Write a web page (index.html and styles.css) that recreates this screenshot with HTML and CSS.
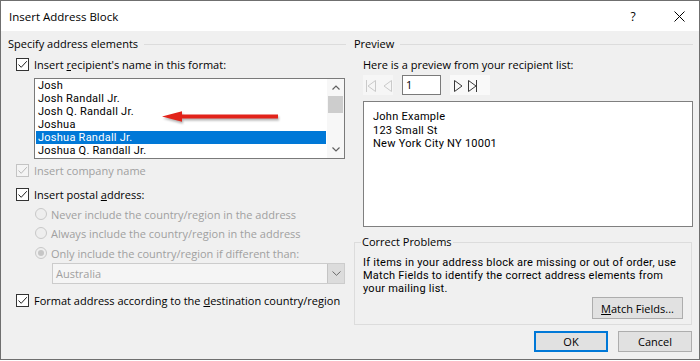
FILE: index.html
```html
<!DOCTYPE html>
<html lang="en">
<head>
  <meta charset="UTF-8">
  <meta name="viewport" content="width=device-width, initial-scale=1.0">
  <title>Insert Address Block</title>
  <link rel="stylesheet" href="styles.css">
</head>
<body>
  <div class="window">
    <div class="titlebar">
      <span class="title">Insert Address Block</span>
      <span class="help">?</span>
      <span class="close">
        <svg width="11" height="11" viewBox="0 0 11 11"><path d="M0.5 0.5L10.5 10.5M10.5 0.5L0.5 10.5" stroke="#000" stroke-width="1"/></svg>
      </span>
    </div>

    <div class="dialog-body">
      <div class="left">
        <div class="group-head"><span>Specify address elements</span><i class="rule"></i></div>

        <div class="check-row row-name">
          <span class="check"><svg width="11" height="11" viewBox="0 0 11 11"><path d="M1.5 5.5L4.2 8.3L9.8 2.2" fill="none" stroke="#222" stroke-width="1"/></svg></span>
          <span>Insert <u>r</u>ecipient's name in this format:</span>
        </div>

        <div class="listbox">
          <ul class="items">
            <li>Josh</li>
            <li>Josh Randall Jr.</li>
            <li>Josh Q. Randall Jr.</li>
            <li>Joshua</li>
            <li class="selected">Joshua Randall Jr.</li>
            <li>Joshua Q. Randall Jr.</li>
          </ul>
          <div class="scrollbar">
            <span class="arrow"><svg width="8" height="5" viewBox="0 0 8 5"><path d="M0.5 4.5L4 1L7.5 4.5" fill="none" stroke="#606060" stroke-width="1.2"/></svg></span>
            <span class="thumb"></span>
            <span class="track"></span>
            <span class="arrow"><svg width="8" height="5" viewBox="0 0 8 5"><path d="M0.5 0.5L4 4L7.5 0.5" fill="none" stroke="#606060" stroke-width="1.2"/></svg></span>
          </div>
        </div>

        <div class="check-row row-company disabled">
          <span class="check"><svg width="11" height="11" viewBox="0 0 11 11"><path d="M1.5 5.5L4.2 8.3L9.8 2.2" fill="none" stroke="#b8b8b8" stroke-width="1"/></svg></span>
          <span>Insert company name</span>
        </div>

        <div class="check-row row-postal">
          <span class="check"><svg width="11" height="11" viewBox="0 0 11 11"><path d="M1.5 5.5L4.2 8.3L9.8 2.2" fill="none" stroke="#222" stroke-width="1"/></svg></span>
          <span>Insert postal <u>a</u>ddress:</span>
        </div>

        <div class="radio-row first">
          <span class="radio"></span>
          <span>Never include the country/region in the address</span>
        </div>
        <div class="radio-row">
          <span class="radio"></span>
          <span>Always include the country/region in the address</span>
        </div>
        <div class="radio-row third">
          <span class="radio on"></span>
          <span>Only include the country/region if different than:</span>
        </div>

        <div class="combo">
          <span class="combo-text">Australia</span>
          <span class="combo-btn"><svg width="9" height="5" viewBox="0 0 9 5"><path d="M0.5 0.5L4.5 4.3L8.5 0.5" fill="none" stroke="#6a6a6a" stroke-width="1"/></svg></span>
        </div>

        <div class="check-row row-format">
          <span class="check"><svg width="11" height="11" viewBox="0 0 11 11"><path d="M1.5 5.5L4.2 8.3L9.8 2.2" fill="none" stroke="#222" stroke-width="1"/></svg></span>
          <span>Format address according to the <u>d</u>estination country/region</span>
        </div>
      </div>

      <div class="right">
        <div class="group-head"><span>Preview</span><i class="rule"></i></div>
        <div class="intro">Here is a preview from your recipient list:</div>

        <div class="nav">
          <span class="nav-box off">
            <svg width="30" height="20" viewBox="0 0 30 20">
              <path d="M3.5 5V17M12.5 5.5L5 11L12.5 16.5Z" fill="none" stroke="#cacaca" stroke-width="1"/>
              <path d="M28.5 5.5L21 11L28.5 16.5Z" fill="none" stroke="#cacaca" stroke-width="1"/>
            </svg>
          </span>
          <span class="record">1</span>
          <span class="nav-box on">
            <svg width="40" height="20" viewBox="0 0 40 20">
              <path d="M4.5 5.5L12 11L4.5 16.5Z" fill="none" stroke="#3a3a3a" stroke-width="1"/>
              <path d="M18.5 5.5L26 11L18.5 16.5ZM26.5 5V17" fill="none" stroke="#3a3a3a" stroke-width="1"/>
            </svg>
          </span>
        </div>

        <div class="preview">
          <div>John Example</div>
          <div>123 Small St</div>
          <div>New York City NY 10001</div>
        </div>

        <div class="problems">
          <span class="problems-title">Correct Problems</span>
          <div class="problems-text">
            <div>If items in your address block are missing or out of order, use</div>
            <div>Match Fields to identify the correct address elements from</div>
            <div>your mailing list.</div>
          </div>
          <button class="btn match"><u>M</u>atch Fields...</button>
        </div>

        <div class="footer">
          <button class="btn ok">OK</button>
          <button class="btn">Cancel</button>
        </div>
      </div>
    </div>

    <!-- red annotation arrow drawn over the list -->
    <svg class="pointer" width="124" height="18" viewBox="0 0 124 18">
      <path d="M2 7.5L22 2.2V5.5H118V9.5H22V12.8Z" fill="#e2231a"/>
    </svg>
  </div>
</body>
</html>
```

FILE: styles.css
```css
* {
  box-sizing: border-box;
}

html, body {
  margin: 0;
  padding: 0;
  background: #fff;
}

body {
  font-family: "Open Sans", "Liberation Sans", Arial, sans-serif;
  font-size: 11px;
  color: #000;
}

.items li,
.preview div,
.problems-text div {
  font-family: Roboto, "Open Sans", Arial, sans-serif;
  letter-spacing: 0.25px;
}

.window {
  position: relative;
  width: 700px;
  height: 360px;
  border: 1px solid #6f6f6f;
  display: flex;
  flex-direction: column;
}

.titlebar {
  height: 30px;
  flex-shrink: 0;
  background: #fff;
  display: flex;
  align-items: center;
  padding-left: 8px;
}

.title {
  font-size: 11.5px;
}

.help {
  margin-left: auto;
  margin-right: 4px;
  width: 44px;
  text-align: center;
  font-size: 12px;
}

.close {
  width: 40px;
  display: flex;
  justify-content: center;
}

.dialog-body {
  flex: 1;
  background: #f0f0f0;
  display: flex;
  gap: 8px;
  padding-top: 6px;
}

.left {
  width: 345px;
  padding-left: 7px;
  display: flex;
  flex-direction: column;
}

.right {
  width: 339px;
  display: flex;
  flex-direction: column;
}

.group-head {
  display: flex;
  align-items: center;
  height: 14px;
  line-height: 14px;
  white-space: nowrap;
}

.group-head .rule {
  flex: 1;
  height: 1px;
  margin-left: 6px;
  background: #dcdcdc;
}

/* checkboxes */
.check-row {
  display: flex;
  align-items: center;
  gap: 5px;
  height: 14px;
  margin-left: 8px;
  white-space: nowrap;
}

.check {
  width: 13px;
  height: 13px;
  border: 1px solid #333;
  background: #fff;
  display: flex;
}

.row-name { margin-top: 6px; }
.row-company { margin-top: 4px; }
.row-postal { margin-top: 10px; }
.row-format { margin-top: 9px; }

.disabled {
  color: #a0a0a0;
}

.disabled .check {
  border-color: #c4c4c4;
  background: #f4f4f4;
}

/* name list */
.listbox {
  margin: 7px 0 0 26px;
  width: 311px;
  height: 81px;
  border: 1px solid #7a7a7a;
  background: #fff;
  display: flex;
}

.items {
  flex: 1;
  list-style: none;
  margin: 0;
  padding: 0;
  overflow: hidden;
}

.items li {
  height: 13px;
  line-height: 13px;
  margin: 0 1px;
  padding-left: 2px;
  white-space: nowrap;
}

.items li.selected {
  background: #0078d7;
  color: #fff;
}

.scrollbar {
  width: 17px;
  display: flex;
  flex-direction: column;
  background: #f7f7f7;
}

.scrollbar .arrow {
  height: 17px;
  display: flex;
  align-items: center;
  justify-content: center;
}

.scrollbar .thumb {
  height: 17px;
  margin: 0 1px;
  background: #cdcdcd;
}

.scrollbar .track {
  flex: 1;
}

/* radios */
.radio-row {
  display: flex;
  align-items: center;
  gap: 4px;
  height: 14px;
  margin: 5px 0 0 27px;
  color: #a0a0a0;
  white-space: nowrap;
}

.radio-row.first { margin-top: 6px; }
.radio-row.third { margin-top: 6px; }

.radio {
  width: 12px;
  height: 12px;
  border: 1px solid #c8c8c8;
  border-radius: 50%;
  background: #eeeeee;
  display: flex;
  align-items: center;
  justify-content: center;
}

.radio.on::after {
  content: "";
  width: 6px;
  height: 6px;
  border-radius: 50%;
  background: #c6c6c6;
}

/* country combo */
.combo {
  margin: 3px 0 0 44px;
  width: 293px;
  height: 21px;
  border: 1px solid #cccccc;
  background: #f5f5f5;
  display: flex;
  align-items: stretch;
}

.combo-text {
  flex: 1;
  padding-left: 3px;
  line-height: 19px;
  color: #a0a0a0;
}

.combo-btn {
  width: 17px;
  border-left: 1px solid #c4c4c4;
  background: #dcdcdc;
  display: flex;
  align-items: center;
  justify-content: center;
}

/* preview side */
.intro {
  margin-top: 7px;
  padding-left: 9px;
  height: 14px;
  line-height: 14px;
}

.nav {
  margin-top: 3px;
  padding-left: 9px;
  height: 20px;
  display: flex;
  gap: 9px;
}

.nav-box {
  display: flex;
  height: 20px;
}

.nav-box.off { background: #f6f6f6; }
.nav-box.on { background: #f9f9f9; }

.record {
  width: 39px;
  height: 20px;
  border: 1px solid #7a7a7a;
  background: #fff;
  padding-left: 3px;
  line-height: 18px;
}

.preview {
  margin: 6px 0 0 9px;
  width: 330px;
  height: 126px;
  border: 1px solid #7f7f7f;
  background: #fff;
  padding: 8px 9px;
  line-height: 13.5px;
}

.problems {
  margin: 15px 1px 0 0;
  border: 1px solid #dcdcdc;
  display: flex;
  flex-direction: column;
  padding-bottom: 5px;
}

.problems-title {
  align-self: flex-start;
  margin: -8px 0 0 6px;
  padding: 0 1px;
  height: 14px;
  line-height: 14px;
  background: #f0f0f0;
}

.problems-text {
  margin-top: 7px;
  padding-left: 8px;
  line-height: 13px;
  white-space: nowrap;
}

.btn {
  font-family: inherit;
  font-size: 11px;
  color: #000;
  background: #e1e1e1;
  border: 1px solid #adadad;
  padding: 0;
  height: 21px;
  width: 74px;
}

.btn.match {
  align-self: flex-end;
  margin: 2px 8px 0 0;
  width: 91px;
  height: 22px;
}

.btn.ok {
  border: 2px solid #0078d7;
}

.footer {
  margin: 6px 1px 0 0;
  display: flex;
  justify-content: flex-end;
  gap: 10px;
}

.pointer {
  position: absolute;
  left: 159px;
  top: 108px;
  filter: drop-shadow(1px 2px 1px rgba(0, 0, 0, 0.3));
}
```
